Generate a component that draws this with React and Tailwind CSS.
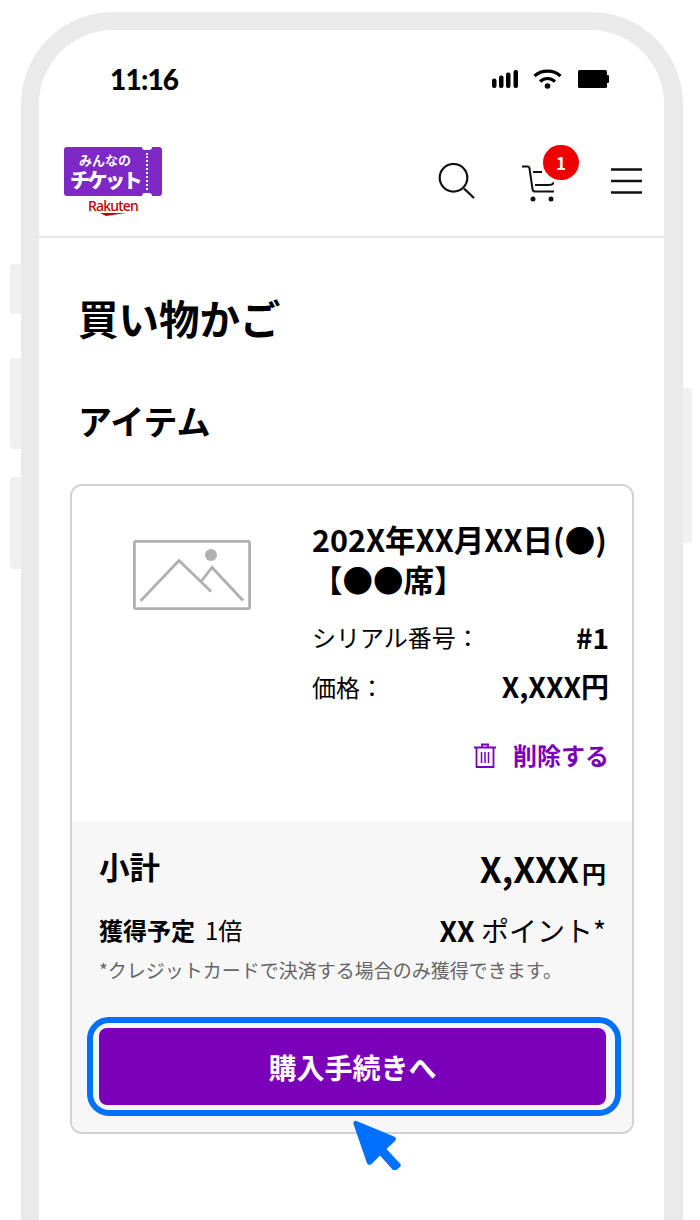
const FONT = '"Noto Sans CJK JP", "Noto Sans", sans-serif';

function Signal() {
  return (
    <svg width="26" height="18" viewBox="0 0 26 18" fill="#000">
      <rect x="0" y="8.500" width="4.500" height="9.500" rx="2" />
      <rect x="7" y="5.500" width="4.500" height="12.500" rx="2" />
      <rect x="14" y="2.500" width="4.500" height="15.500" rx="2" />
      <rect x="21.500" y="0" width="4.500" height="18" rx="2" />
    </svg>
  );
}
function Wifi() {
  return (
    <svg width="29" height="20" viewBox="0 0 29 20" fill="none" stroke="#000" strokeWidth="3.200">
      <path d="M1.500 7C8.500.5 20.500.5 27.500 7" />
      <path d="M7 12.500c4.500-4 10.500-4 15 0" />
      <circle cx="14.500" cy="17" r="2.800" fill="#000" stroke="none" />
    </svg>
  );
}
function Battery() {
  return (
    <svg width="31" height="18" viewBox="0 0 31 18" fill="#000">
      <rect x="0" y="0" width="29" height="18" rx="1.500" />
      <rect x="28" y="5" width="3" height="8" rx="1" />
    </svg>
  );
}
function Search() {
  return (
    <svg width="37" height="37" viewBox="0 0 37 37" fill="none" stroke="#111" strokeWidth="2.200">
      <circle cx="15.500" cy="14.800" r="13.800" />
      <path d="M26 25.500l10 9.500" strokeWidth="2.400" />
    </svg>
  );
}
function Cart() {
  return (
    <svg width="32" height="37" viewBox="0 0 32 37" fill="none" stroke="#111" strokeWidth="2">
      <path d="M0 1.500h5.500c1.300 0 1.800.8 2 2L10.500 24c.2 1.500 1 2.500 2.500 2.500H32" />
      <path d="M11 7h9" />
      <path d="M13 20h14c3 0 4.500-1 5-3" />
      <circle cx="11" cy="34" r="2.500" fill="#111" stroke="none" />
      <circle cx="29" cy="34" r="2.500" fill="#111" stroke="none" />
    </svg>
  );
}
function Menu() {
  return (
    <svg width="31" height="26" viewBox="0 0 31 26" fill="none" stroke="#111" strokeWidth="2.400">
      <path d="M0 1.500h31M0 13h31M0 24.500h31" />
    </svg>
  );
}
function Placeholder() {
  return (
    <svg width="118" height="70" viewBox="0 0 118 70" fill="none" stroke="#b0b0b0" strokeWidth="2.800">
      <rect x="1.400" y="1.400" width="115.200" height="67.200" rx="1.500" />
      <circle cx="78" cy="15" r="6" fill="#b0b0b0" stroke="none" />
      <path d="M7.500 61L46 20.500 78 51.500" />
      <path d="M68 41.500L79 27.500 110 60.500" />
    </svg>
  );
}
function Trash() {
  return (
    <svg width="22" height="25" viewBox="0 0 22 25" fill="none" stroke="#7b00b9" strokeWidth="1.800">
      <path d="M0 4.500h22M8 4V1.500h6V4" />
      <path d="M2.500 4.500V24h17V4.500" />
      <path d="M7.500 9v11M11 9v11M14.500 9v11" strokeWidth="1.500" />
    </svg>
  );
}
function Arrow() {
  return (
    <svg width="50" height="50" viewBox="0 0 50 50" fill="#0070ff">
      <path d="M3.500 1L41 16.500c2 .8 2.500 3 1 4.500l-8.500 8 13.500 14.500c1 1 1 2.500 0 3.500l-3.500 3c-1 1-2.500 1-3.500 0L27 35.500 18.500 44c-1.800 1.500-4 1-4.800-1.500L.5 4C0 2 1.500 .2 3.500 1z" />
    </svg>
  );
}
function Logo() {
  return (
    <div className="flex w-[98px] flex-col items-center">
      <div className="relative flex h-[49px] w-[98px] items-center rounded-[3px] bg-[#7e28c6] pl-[6px] text-white">
        <div className="flex w-[70px] flex-col items-center whitespace-nowrap">
          <span className="text-[13px] font-bold leading-[16px]">みんなの</span>
          <span className="text-[20px] font-black leading-[23px] tracking-[-2.500px]">チケット</span>
        </div>
        <span className="absolute left-[78px] top-[-3px] h-[6px] w-[10px] rounded-full bg-white" />
        <span className="absolute bottom-[-3px] left-[78px] h-[6px] w-[10px] rounded-full bg-white" />
        <span className="absolute bottom-[6px] left-[82px] top-[6px] border-l-2 border-dotted border-white" />
      </div>
      <span className="mt-[3px] h-[14px] text-[14px] font-medium leading-[14px] tracking-[-0.800px] text-[#c00000]" style={{ fontFamily: '"Noto Sans", sans-serif' }}>Rakuten</span>
      <svg width="26" height="3" viewBox="0 0 26 3" fill="#c00000"><path d="M0 0h26L6 3z" /></svg>
    </div>
  );
}

export default function App() {
  return (
    <div className="relative h-[1220px] w-[700px] overflow-hidden bg-white text-black" style={{ fontFamily: FONT }}>
      <span className="absolute left-[10px] top-[264px] h-[50px] w-[11px] rounded-l-[3px] bg-[#f0f0f0]" />
      <span className="absolute left-[10px] top-[358px] h-[91px] w-[11px] rounded-l-[3px] bg-[#f0f0f0]" />
      <span className="absolute left-[10px] top-[477px] h-[92px] w-[11px] rounded-l-[3px] bg-[#f0f0f0]" />
      <span className="absolute left-[683px] top-[388px] h-[155px] w-[9px] rounded-r-[3px] bg-[#f0f0f0]" />

      <div className="ml-[21px] mt-[12px] h-[1208px] w-[662px] rounded-t-[92px] border-l-[18px] border-r-[19px] border-t-[18px] border-[#eaeaea]">
        <div className="flex h-[100px] items-start justify-between pl-[71px] pr-[55px] pt-[19px]">
          <span className="mt-[12px] text-[28px] font-black leading-[36px] tracking-[-0.800px]" style={{ fontFamily: 'Lato, sans-serif' }}>11:16</span>
          <div className="flex items-center pt-[20px]">
            <Signal />
            <div className="ml-[15px]"><Wifi /></div>
            <div className="ml-[16px]"><Battery /></div>
          </div>
        </div>

        <div className="flex h-[108px] items-start justify-between border-b-2 border-[#e6e6e6] pl-[25px] pr-[22px] pt-[17px]">
          <Logo />
          <div className="flex items-start pt-[16px]">
            <Search />
            <div className="relative ml-[47px] mt-[2px]">
              <Cart />
              <span className="absolute left-[21px] top-[-20px] flex h-[35px] w-[36px] items-center justify-center rounded-full bg-[#ee0000] text-[17px] font-bold leading-none text-white">1</span>
            </div>
            <div className="ml-[57px] mt-[5px]"><Menu /></div>
          </div>
        </div>

        <div className="pl-[31px] pr-[30px]">
          <h1 className="ml-[8px] mt-[50px] text-[40.500px] font-bold leading-[60px]">買い物かご</h1>
          <h2 className="ml-[8px] mt-[49px] text-[34px] font-bold leading-[48px]">アイテム</h2>

          <div className="mt-[39px] rounded-[12px] border-2 border-[#d2d2d2]">
            <div className="flex h-[335px]">
              <div className="ml-[61px] mt-[54px]"><Placeholder /></div>
              <div className="ml-[61px] mt-[33px] w-[297px]">
                <p className="whitespace-nowrap text-[30.500px] font-bold leading-[40px]">202X年XX月XX日(●)<br />【●●席】</p>
                <div className="mt-[13px] flex items-center justify-between">
                  <span className="text-[24px] leading-[50px]">シリアル番号：</span>
                  <span className="text-[28px] font-bold leading-[50px]">#1</span>
                </div>
                <div className="flex items-center justify-between">
                  <span className="text-[24px] leading-[49px]">価格：</span>
                  <span className="text-[28px] font-bold leading-[49px]">X,XXX円</span>
                </div>
                <div className="mt-[26px] flex items-center justify-end gap-[17px]">
                  <Trash />
                  <span className="text-[24px] font-bold leading-[36px] text-[#7b00b9]">削除する</span>
                </div>
              </div>
            </div>

            <div className="h-[311px] rounded-b-[10px] bg-[#f7f7f7] pl-[27px] pr-[26px] pt-[20px]">
              <div className="flex items-center justify-between">
                <span className="mb-[8px] text-[30.500px] font-bold leading-[50px]">小計</span>
                <span className="text-[35px] font-bold leading-[50px]">X,XXX<span className="ml-[3px] text-[24px]">円</span></span>
              </div>
              <div className="mt-[11px] flex items-center justify-between">
                <span className="text-[24px] leading-[40px]"><b>獲得予定</b><span className="ml-[10px]">1倍</span></span>
                <span className="text-[28px] leading-[40px]"><b>XX</b> ポイント*</span>
              </div>
              <p className="mt-[6px] text-[19px] leading-[28px] text-[#666666]">*クレジットカードで決済する場合のみ獲得できます。</p>
              <div className="relative mt-[44px] flex h-[77px] items-center justify-center rounded-[8px] bg-[#7b00b9] text-[28px] font-bold text-white">
                購入手続きへ
                <span className="absolute -bottom-[11px] -left-[12px] -right-[15px] -top-[11px] rounded-[22px] border-[6px] border-[#0070ff]" />
                <span className="absolute left-[254px] top-[92px]"><Arrow /></span>
              </div>
            </div>
          </div>
        </div>
      </div>
    </div>
  );
}
